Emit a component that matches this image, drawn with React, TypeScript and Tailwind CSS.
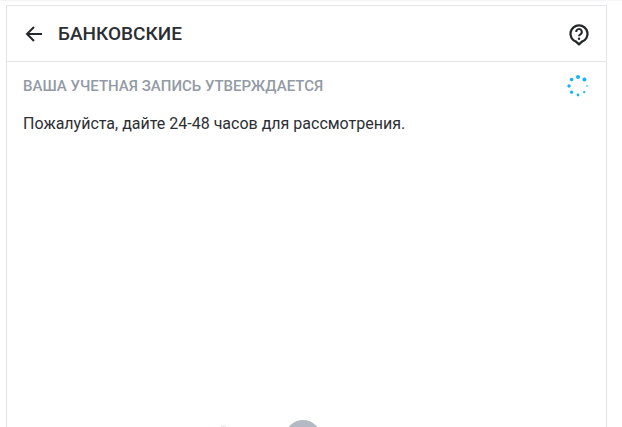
export default function App() {
  return (
    <div className="h-[427px] w-[622px] overflow-hidden border-t border-[#f4f5f6] bg-white pl-[6px] pr-[15px] pt-[4px] font-['Roboto',sans-serif]">
      <div className="relative h-[600px] w-[601px] border-x border-t border-[#e3e5e8] bg-white">
        <header className="flex h-[56px] items-center justify-between border-b border-[#e3e5e8] pl-[15px] pr-[15px] pt-[1px]">
          <div className="flex items-center">
            <svg width="24" height="24" viewBox="0 0 24 24" fill="none" stroke="#25282b" strokeWidth="2">
              <path d="M20 12H5M12 5l-7 7 7 7" />
            </svg>
            <h1 className="ml-[12px] text-[19px] font-medium text-[#2b2e33]">БАНКОВСКИЕ</h1>
          </div>
          <svg width="24" height="24" viewBox="0 0 24 24" fill="none">
            <path d="M12 3.4a8.4 8.4 0 0 1 3 16.3L12 22.4l-3-2.7A8.4 8.4 0 0 1 12 3.4z" stroke="#25282b" strokeWidth="2.3" strokeLinejoin="round" />
            <path d="M9.2 9.9a2.8 2.8 0 1 1 4.2 2.4c-.9.5-1.4 1-1.4 2" stroke="#25282b" strokeWidth="2" />
            <circle cx="12" cy="16.8" r="1.2" fill="#25282b" />
          </svg>
        </header>
        <div className="flex items-center justify-between pl-[16px] pr-[16px] pt-[12px]">
          <h2 className="text-[15px] font-medium text-[#929aa5]">ВАША УЧЕТНАЯ ЗАПИСЬ УТВЕРЖДАЕТСЯ</h2>
          <svg width="24" height="24" viewBox="0 0 24 24" fill="#12b5f5">
            <circle cx="12" cy="3" r="2" />
            <circle cx="18.4" cy="5.6" r="2" />
            <circle cx="21" cy="12" r="1.1" opacity="0.6" />
            <circle cx="18.2" cy="18.2" r="1.1" />
            <circle cx="12" cy="21" r="1.4" />
            <circle cx="5.6" cy="18.2" r="1.6" />
            <circle cx="3" cy="12" r="1.7" />
            <circle cx="5.6" cy="5.6" r="1.8" />
          </svg>
        </div>
        <p className="ml-[16px] mt-[14px] text-[16px] text-[#2b2e33]">Пожалуйста, дайте 24-48 часов для рассмотрения.</p>
        <div className="absolute left-[278px] top-[414px] h-[36px] w-[36px] rounded-full bg-[#b4bac3]" />
        <div className="absolute left-[214px] top-[419px] h-[8px] w-[5px] bg-[#f0f1f3]" />
      </div>
    </div>
  );
}
